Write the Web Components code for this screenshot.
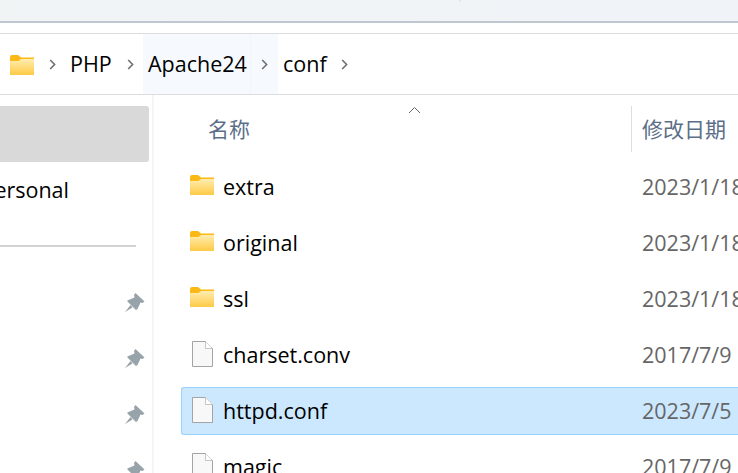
<!DOCTYPE html>
<html><head><meta charset="utf-8"><style>
html,body{margin:0;height:473px;overflow:hidden;background:#fff}
body{font:21.5px "Open Sans","Noto Sans CJK SC",sans-serif;color:#000}
</style></head><body>
<template id="t-folder"><style>:host{display:inline-flex;width:26px;height:20px}svg{display:block}</style>
<svg width="26" height="20" viewBox="0 0 26 20"><defs><linearGradient id="g" x1="0" y1="0" x2="0" y2="1"><stop offset="0" stop-color="#ffedb0"/><stop offset="1" stop-color="#ffca45"/></linearGradient></defs>
<path d="M1 2Q1 0 3 0H9L12 2.5H25V19Q25 20 24 20H2Q1 20 1 19Z" fill="#fbb917"/><path d="M1 6H9.5L12 4H25V19Q25 20 24 20H2Q1 20 1 19Z" fill="url(#g)"/></svg></template>
<template id="t-file"><style>:host{display:inline-flex;width:26px;height:28px}svg{display:block}</style>
<svg width="26" height="28" viewBox="0 0 26 28"><path d="M3.5 1.5H16.5L23.5 8.5V26.5H3.5Z" fill="#f8f8f8" stroke="#a4a4a4"/><path d="M16.5 1.5V8.5H23.5" fill="#fff" stroke="#c4c4c4"/></svg></template>
<template id="t-pin"><style>:host{display:block;width:20px;height:20px}svg{display:block}</style>
<svg width="20" height="20" viewBox="0 0 20 20"><path d="M10.5 0L19.5 8.5L17.5 10L15.5 9.5L12.5 16L11 17L2 8L3.5 7L9.5 4.5L9 2Z" fill="#98a2a9"/><path d="M5.5 12L0 19L7.5 14.5Z" fill="#98a2a9"/></svg></template>
<template id="t-chev"><style>:host{display:block;width:7px;height:11px}svg{display:block}</style>
<svg width="7" height="11" viewBox="0 0 7 11"><path d="M1.2 1L5.6 5.5L1.2 10" fill="none" stroke="#6f6f6f" stroke-width="1.6"/></svg></template>

<template id="t-crumbs"><style>
:host{display:flex;height:60px;margin-top:10px;border-top:1px solid #dcdcdc;border-bottom:1px solid #dcdcdc;align-items:stretch}
.f{padding:18px 0 0 9px;width:40px}
.c{display:flex;align-items:center}
.c.chev{width:7px}
.pad{display:flex;align-items:center;padding-bottom:2px;box-sizing:border-box}
.hov{display:flex;background:#f6fafe}
.hov .a{width:108px;padding:0 0 2px 5px;box-sizing:border-box;border-right:1px solid #f0f6fc;display:flex;align-items:center}
.hov .b{width:27px;display:flex;align-items:center;padding-left:10px;box-sizing:border-box}
</style>
<div class="f"><x-folder></x-folder></div>
<div class="c chev"><x-chev></x-chev></div>
<div class="pad" style="margin-left:14px;width:57px">PHP</div>
<div class="c chev"><x-chev></x-chev></div>
<div class="hov" style="margin-left:9px"><div class="a">Apache24</div><div class="b"><x-chev></x-chev></div></div>
<div class="pad" style="margin-left:5px;width:58px">conf</div>
<div class="c chev"><x-chev></x-chev></div>
</template>

<template id="t-side"><style>
:host{display:flex;flex-direction:column;width:154px;height:378px;border-right:2px solid #f5f5f5;overflow:hidden;flex:none;padding-top:11px;box-sizing:border-box}
.sel{flex:none;width:149px;height:56px;background:#d9d9d9;border-radius:0 3px 3px 0}
.txt{flex:none;width:69px;height:56px;padding-bottom:2px;box-sizing:border-box;display:flex;justify-content:flex-end;align-items:center;overflow:hidden;white-space:nowrap}
.rule{flex:none;width:136px;height:2px;background:#d3d3d3;margin-top:27px}
.pins{flex:none;display:flex;flex-direction:column;gap:36px;align-items:flex-end;padding:46px 7px 0 0;box-sizing:border-box;width:152px}
</style>
<div class="sel"></div><div class="txt"><span>Personal</span></div><div class="rule"></div>
<div class="pins"><x-pin></x-pin><x-pin></x-pin><x-pin></x-pin><x-pin></x-pin></div>
</template>

<template id="t-head"><style>
:host{display:flex;height:46px;position:relative;color:#5b6f88;margin-bottom:11px;font-size:21px}
.n{flex:none;width:450px;padding-left:27px;box-sizing:border-box;line-height:46px}
.d{border-left:1px solid #dedede;padding-left:10px;line-height:46px;white-space:nowrap}
svg{position:absolute;left:227px;top:0}
</style>
<div class="n">名称</div><div class="d">修改日期</div>
<svg width="13" height="8" viewBox="0 0 13 8"><path d="M1 7L6.5 1.5L12 7" fill="none" stroke="#666" stroke-width="1"/></svg>
</template>

<template id="t-row"><style>
:host{display:flex;align-items:center;height:48px;box-sizing:border-box;border:1px solid transparent;border-right:0;border-radius:3px 0 0 3px;margin-bottom:8px;white-space:nowrap}
:host([selected]){background:#cce8ff;border-color:#99d1ff}
.i{flex:none;width:26px;margin-left:7px;display:flex;justify-content:center}
.n{flex:none;width:419px;margin-left:8px;padding-bottom:2px}
.d{flex:none;color:#666;padding-bottom:2px}
::slotted(x-folder){margin-bottom:4px}
::slotted(x-file){margin-bottom:2px}
</style>
<div class="i"><slot name="icon"></slot></div><div class="n"><slot></slot></div><div class="d"><slot name="date"></slot></div>
</template>

<template id="t-list"><style>
:host{display:block;flex:1;min-width:0;overflow:hidden;height:378px;padding:11px 0 0 27px;box-sizing:border-box}
</style><slot></slot></template>

<template id="t-app"><style>
:host{display:block;height:473px;overflow:hidden}
.top{height:21px;background:linear-gradient(90deg,#f0f4f5,#f0f3f8);border-bottom:2px solid #bfc8d1;position:relative}
.top i{position:absolute;left:459px;top:0;width:2px;height:2px;background:#e2e6ea}
.main{display:flex}
</style>
<div class="top"><i></i></div>
<x-crumbs></x-crumbs>
<div class="main"><x-side></x-side><slot></slot></div>
</template>

<x-app>
<x-list>
<x-head></x-head>
<x-row><x-folder slot="icon"></x-folder>extra<span slot="date">2023/1/18</span></x-row>
<x-row><x-folder slot="icon"></x-folder>original<span slot="date">2023/1/18</span></x-row>
<x-row><x-folder slot="icon"></x-folder>ssl<span slot="date">2023/1/18</span></x-row>
<x-row><x-file slot="icon"></x-file>charset.conv<span slot="date">2017/7/9</span></x-row>
<x-row selected><x-file slot="icon"></x-file>httpd.conf<span slot="date">2023/7/5</span></x-row>
<x-row><x-file slot="icon"></x-file>magic<span slot="date">2017/7/9</span></x-row>
</x-list>
</x-app>
<script>
const map={'x-folder':'t-folder','x-file':'t-file','x-pin':'t-pin','x-chev':'t-chev','x-crumbs':'t-crumbs','x-side':'t-side','x-head':'t-head','x-row':'t-row','x-list':'t-list','x-app':'t-app'};
for(const [n,id] of Object.entries(map)){customElements.define(n,class extends HTMLElement{constructor(){super();this.attachShadow({mode:'open'}).appendChild(document.getElementById(id).content.cloneNode(true));}});}
</script>
</body></html>
